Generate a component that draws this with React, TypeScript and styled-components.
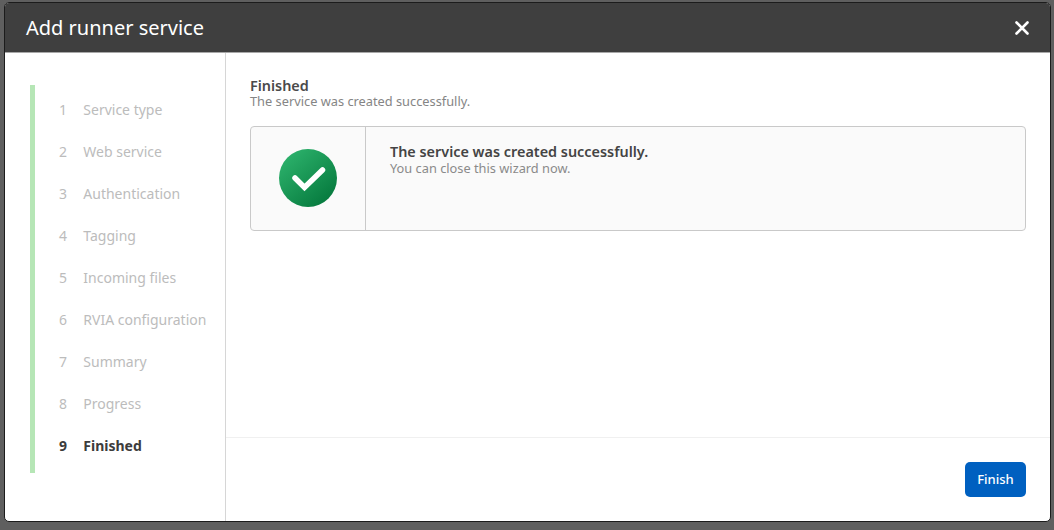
import styled, { createGlobalStyle } from "styled-components";

const GlobalStyle = createGlobalStyle`
  html, body {
    margin: 0;
    padding: 0;
    background: #5f5f5f;
    font-family: "Noto Sans", sans-serif;
  }
`;

const steps = [
  "Service type",
  "Web service",
  "Authentication",
  "Tagging",
  "Incoming files",
  "RVIA configuration",
  "Summary",
  "Progress",
  "Finished",
];

const App = () => {
  return (
    <>
      <GlobalStyle />
      <Page>
        <Dialog>
          <Header>
            <Title>Add runner service</Title>
            <CloseButton aria-label="Close">
              <svg width="14" height="14" viewBox="0 0 14 14">
                <path d="M1.5 1.5l11 11M12.5 1.5l-11 11" stroke="#fff" strokeWidth="2.6" strokeLinecap="round" />
              </svg>
            </CloseButton>
          </Header>
          <Body>
            <Sidebar>
              <StepList>
                {steps.map((step, i) => (
                  <Step key={step} $active={i === steps.length - 1}>
                    <StepNumber>{i + 1}</StepNumber>
                    {step}
                  </Step>
                ))}
              </StepList>
            </Sidebar>
            <Main>
              <Content>
                <Heading>Finished</Heading>
                <Subheading>The service was created successfully.</Subheading>
                <Card>
                  <IconCell>
                    <svg width="58" height="58" viewBox="0 0 58 58">
                      <defs>
                        <linearGradient id="ok" x1="0.15" y1="0.1" x2="0.85" y2="0.9">
                          <stop offset="0" stopColor="#2bb06a" />
                          <stop offset="1" stopColor="#067a3e" />
                        </linearGradient>
                      </defs>
                      <circle cx="29" cy="29" r="29" fill="url(#ok)" />
                      <path d="M16 29l9.5 9.5 18-17.5" fill="none" stroke="#fff" strokeWidth="5.5" strokeLinecap="round" strokeLinejoin="miter" />
                    </svg>
                  </IconCell>
                  <Message>
                    <MessageTitle>The service was created successfully.</MessageTitle>
                    <MessageText>You can close this wizard now.</MessageText>
                  </Message>
                </Card>
              </Content>
              <Footer>
                <FinishButton>Finish</FinishButton>
              </Footer>
            </Main>
          </Body>
        </Dialog>
      </Page>
    </>
  );
};

export default App;

const Page = styled.div`
  width: 1054px;
  height: 530px;
  padding: 2px 0 0 4px;
  box-sizing: border-box;
  overflow: hidden;
`;

const Dialog = styled.div`
  width: 1047px;
  height: 520px;
  box-sizing: border-box;
  display: flex;
  flex-direction: column;
  background: #fff;
  border: 1px solid #1c1c1c;
  border-radius: 5px;
  overflow: hidden;
`;

const Header = styled.div`
  height: 50px;
  flex: none;
  box-sizing: border-box;
  display: flex;
  align-items: center;
  justify-content: space-between;
  padding: 0 21px 0 21px;
  background: #3f3f3f;
  border-bottom: 1px solid #a8a8a8;
`;

const Title = styled.h1`
  margin: 0;
  font-size: 20px;
  font-weight: 400;
  color: #fff;
`;

const CloseButton = styled.button`
  display: flex;
  padding: 0;
  border: 0;
  background: none;
`;

const Body = styled.div`
  flex: 1;
  display: flex;
  min-height: 0;
`;

const Sidebar = styled.nav`
  width: 221px;
  flex: none;
  box-sizing: border-box;
  padding: 32px 0 0 25px;
  border-right: 1px solid #d6d6d6;
`;

const StepList = styled.div`
  display: flex;
  flex-direction: column;
  padding: 3px 0 7px;
  border-left: 5px solid #b6e6b6;
`;

const Step = styled.div<{ $active?: boolean }>`
  display: flex;
  align-items: center;
  height: 42px;
  padding-left: 24px;
  font-size: 14px;
  font-weight: ${(p) => (p.$active ? 700 : 400)};
  color: ${(p) => (p.$active ? "#3c3c3c" : "#bcbcbc")};
`;

const StepNumber = styled.span`
  width: 24.3px;
`;

const Main = styled.div`
  flex: 1;
  display: flex;
  flex-direction: column;
  min-width: 0;
`;

const Content = styled.div`
  flex: 1;
  padding: 24px 24px 0 24px;
`;

const Heading = styled.div`
  font-size: 14.4px;
  line-height: 17px;
  font-weight: 600;
  color: #4a4a4a;
`;

const Subheading = styled.div`
  font-size: 12.8px;
  line-height: 15px;
  color: #858585;
`;

const Card = styled.div`
  display: flex;
  height: 105px;
  margin-top: 17px;
  box-sizing: border-box;
  background: #fafafa;
  border: 1px solid #c9c9c9;
  border-radius: 4px;
`;

const IconCell = styled.div`
  width: 115px;
  flex: none;
  box-sizing: border-box;
  display: flex;
  align-items: center;
  justify-content: center;
  padding-bottom: 2px;
  border-right: 1px solid #c9c9c9;
`;

const Message = styled.div`
  padding: 16px 24px;
`;

const MessageTitle = styled.div`
  font-size: 14.4px;
  line-height: 17px;
  font-weight: 600;
  color: #444;
`;

const MessageText = styled.div`
  font-size: 12.8px;
  line-height: 16px;
  color: #8a8a8a;
`;

const Footer = styled.div`
  height: 84px;
  flex: none;
  display: flex;
  align-items: flex-start;
  justify-content: flex-end;
  box-sizing: border-box;
  padding: 24px 24px 0 0;
  border-top: 1px solid #f0f0f0;
`;

const FinishButton = styled.button`
  width: 61px;
  height: 35px;
  padding: 0 0 2px;
  border: 0;
  border-radius: 5px;
  background: #0060c0;
  color: #fff;
  font-family: inherit;
  font-size: 13px;
  font-weight: 500;
`;
